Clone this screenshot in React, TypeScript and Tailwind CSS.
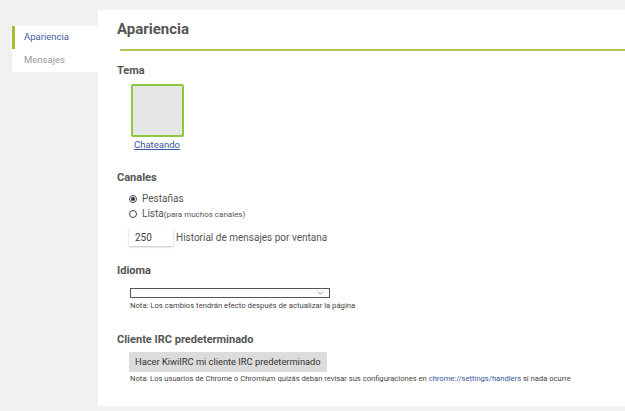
import { ChevronDown } from "lucide-react";

export default function App() {
    return (
        <div
            className="flex min-h-[411px] w-[625px] items-start bg-[#f1f1f1] pt-[10px] text-[#555]"
            style={{ fontFamily: "Roboto, 'Liberation Sans', sans-serif" }}
        >
            <aside className="mt-[16px] ml-[12px] w-[86px] bg-white text-[9.5px]">
                <div className="flex h-[23px] items-center border-l-[3px] border-[#a2c037] pl-[9px] text-[#4b5aa3]">
                    Apariencia
                </div>
                <div className="flex h-[23px] items-center pl-[12px] text-[#999]">
                    Mensajes
                </div>
            </aside>

            <main className="h-[396px] flex-1 bg-white pl-[19px]">
                <h1 className="pt-[8px] text-[15px] leading-[22px] font-bold text-[#555]">
                    Apariencia
                </h1>
                <div className="mt-[9px] ml-[3px] h-[2px] bg-[#b2c454]" />

                <h2 className="mt-[13px] text-[11px] leading-[14px] font-bold">Tema</h2>
                <div className="mt-[6px] ml-[13px] flex w-[54px] flex-col items-center">
                    <div className="h-[53px] w-[53px] rounded-[2px] border-2 border-[#8dc63f] bg-[#e6e6e6]" />
                    <a href="#" className="mt-[1px] text-[9.5px] leading-[13px] text-[#3b55a3] underline">
                        Chateando
                    </a>
                </div>

                <h2 className="mt-[20px] text-[11px] leading-[14px] font-bold">Canales</h2>
                <div className="mt-[7px] ml-[12px] flex flex-col gap-[2px] text-[10px] leading-[13px] text-[#555]">
                    <label className="flex items-center gap-[5px]">
                        <span className="flex h-[8px] w-[8px] items-center justify-center rounded-full border border-[#444]">
                            <span className="h-[4px] w-[4px] rounded-full bg-[#333]" />
                        </span>
                        Pestañas
                    </label>
                    <label className="flex items-center gap-[5px]">
                        <span className="h-[8px] w-[8px] rounded-full border border-[#444]" />
                        <span>
                            Lista<span className="text-[8px]">(para muchos canales)</span>
                        </span>
                    </label>
                </div>
                <div className="mt-[7px] ml-[12px] flex items-center gap-[3px] text-[10px]">
                    <div className="flex h-[18px] w-[44px] items-center pl-[6px] text-[#444] shadow-[0_1px_2px_rgba(0,0,0,0.25)]">
                        250
                    </div>
                    <span>Historial de mensajes por ventana</span>
                </div>

                <h2 className="mt-[18px] text-[11px] leading-[14px] font-bold">Idioma</h2>
                <div className="mt-[10px] ml-[13px] flex h-[10px] w-[200px] items-center justify-end border border-[#555] pr-[3px]">
                    <ChevronDown className="h-[10px] w-[11px] text-[#555]" strokeWidth={1.5} />
                </div>
                <p className="mt-[3px] ml-[13px] text-[7.7px] leading-[10px] text-[#444]">
                    Nota: Los cambios tendrán efecto después de actualizar la página
                </p>

                <h2 className="mt-[22px] text-[11px] leading-[14px] font-bold">Cliente IRC predeterminado</h2>
                <button className="mt-[5px] ml-[12px] h-[20px] bg-[#dcdcdc] px-[6px] text-[9.3px] text-[#333]">
                    Hacer KiwiIRC mi cliente IRC predeterminado
                </button>
                <p className="mt-[2px] ml-[13px] text-[7.6px] leading-[10px] text-[#444]">
                    Nota: Los usuarios de Chrome o Chromium quizás deban revisar sus configuraciones en{" "}
                    <a href="#" className="text-[#3b55a3]">
                        chrome://settings/handlers
                    </a>{" "}
                    si nada ocurre
                </p>
            </main>
        </div>
    );
}
